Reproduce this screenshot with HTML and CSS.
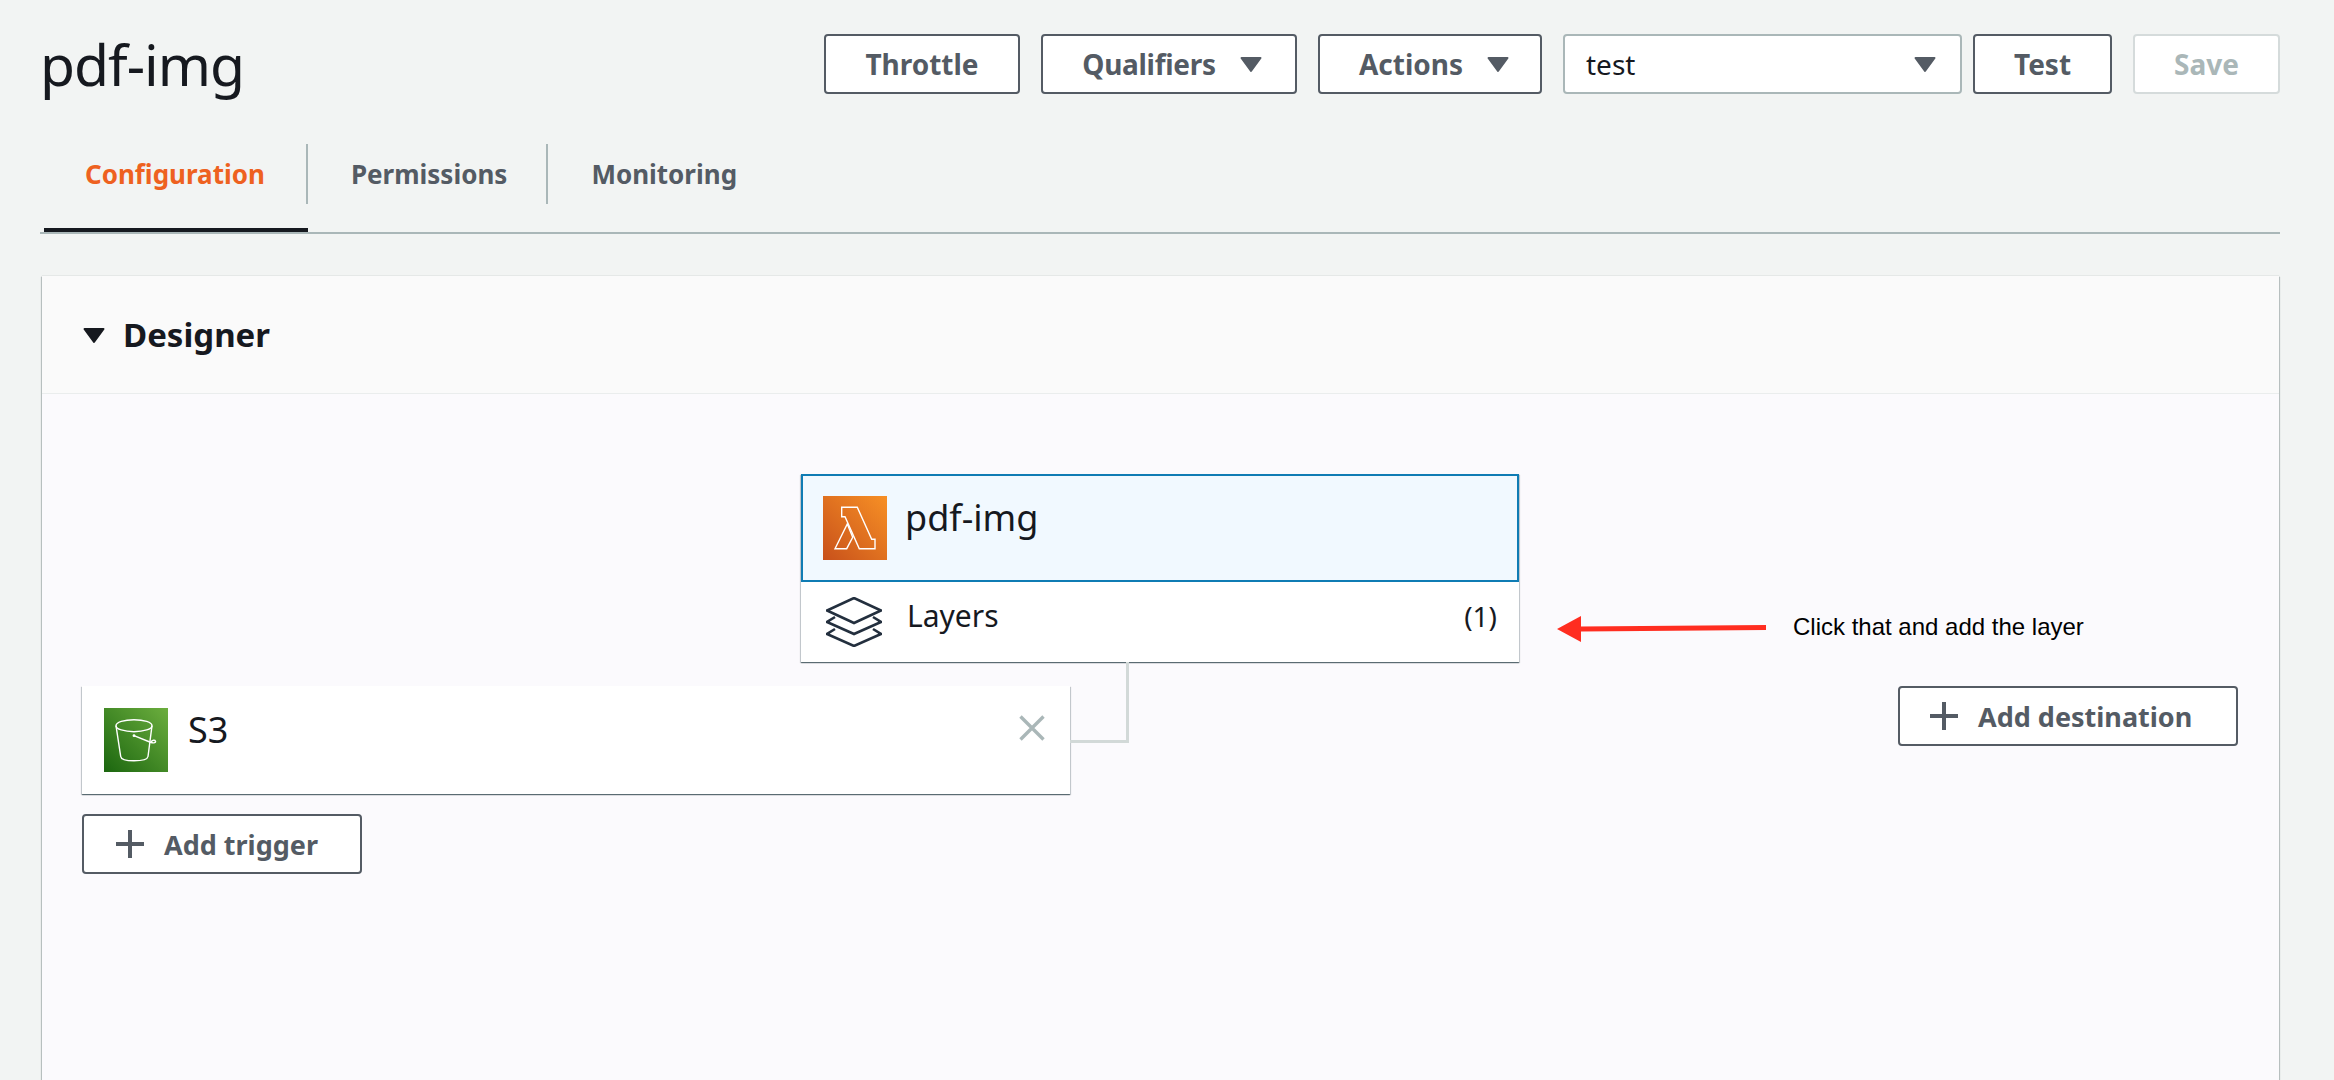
FILE: index.html
```html
<!DOCTYPE html>
<html>
  <head>
    <meta charset="utf-8">
    <link rel="stylesheet" href="styles.css">
    <title>pdf-img</title>
  </head>
  <body>
    <header class="top">
      <h1 class="title">pdf-img</h1>
      <div class="actions">
        <button class="btn w-throttle">Throttle</button>
        <button class="btn w-qualifiers">Qualifiers
          <svg class="caret" viewBox="0 0 22 17"><polygon points="1.5,2 20.5,2 11,15" /></svg>
        </button>
        <button class="btn w-actions">Actions
          <svg class="caret" viewBox="0 0 22 17"><polygon points="1.5,2 20.5,2 11,15" /></svg>
        </button>
        <div class="select">
          <span>test</span>
          <svg class="caret" viewBox="0 0 22 17"><polygon points="1.5,2 20.5,2 11,15" /></svg>
        </div>
        <button class="btn w-test">Test</button>
        <button class="btn w-save disabled">Save</button>
      </div>
    </header>

    <nav class="tabs">
      <div class="tab active"><span>Configuration</span></div>
      <div class="tab"><span>Permissions</span></div>
      <div class="tab last"><span>Monitoring</span></div>
    </nav>

    <section class="panel">
      <div class="panel-head">
        <svg class="panel-caret" viewBox="0 0 22 17"><polygon points="1.5,2 20.5,2 11,15" /></svg>
        <h2>Designer</h2>
      </div>
      <div class="canvas">
        <div class="fn-card">
          <div class="fn-head">
            <svg class="service-icon" viewBox="0 0 64 64">
              <defs>
                <linearGradient id="orange" x1="0" y1="1" x2="1" y2="0">
                  <stop offset="0" stop-color="#c8511b" />
                  <stop offset="1" stop-color="#f79025" />
                </linearGradient>
              </defs>
              <rect width="64" height="64" fill="url(#orange)" />
              <path class="glyph" d="M18.7 11.3H34.3L48.7 43.3H52V52.7H36.3L22 20.7H18.7Z" />
              <path class="glyph" d="M24.3 28L29.7 41.3L23.7 52.7H12Z" />
            </svg>
            <span class="fn-name">pdf-img</span>
          </div>
          <div class="fn-layers">
            <svg class="layers-icon" viewBox="0 0 56 50">
              <path d="M28 1L55 13.5L28 26L1 13.5Z" />
              <path d="M9 20L1 25L28 37L55 25L47 20" />
              <path d="M9 32L1 37L28 49L55 37L47 32" />
            </svg>
            <span class="layers-name">Layers</span>
            <span class="layers-count">(1)</span>
          </div>
        </div>

        <div class="note">
          <svg class="note-arrow" viewBox="0 0 210 26">
            <path d="M0 13L24 0V10.5L209 9V14L24 15.5V26Z" />
          </svg>
          <span>Click that and add the layer</span>
        </div>

        <div class="flow-row">
          <div class="triggers">
            <div class="trigger-card">
              <svg class="service-icon" viewBox="0 0 64 64">
                <defs>
                  <linearGradient id="green" x1="0" y1="1" x2="1" y2="0">
                    <stop offset="0" stop-color="#1b660f" />
                    <stop offset="1" stop-color="#6cae3e" />
                  </linearGradient>
                </defs>
                <rect width="64" height="64" fill="url(#green)" />
                <ellipse class="glyph" cx="30" cy="17.7" rx="18" ry="6" />
                <path class="glyph" d="M12 17.7L16.7 48.5C17 51.5 23 52.8 30 52.8S43.5 51.5 44 48.5L48 17.7" />
                <path class="glyph" d="M30 27.7L47 34.5C50 35.5 52 34.5 51.5 33.2S48 31.5 47 34.5" />
                <circle cx="30" cy="27.7" r="1.4" fill="#fff" />
              </svg>
              <span class="trigger-name">S3</span>
              <svg class="close" viewBox="0 0 26 26"><path d="M1.5 1.5L24.5 24.5M24.5 1.5L1.5 24.5" /></svg>
            </div>
            <button class="btn add w-trigger">
              <svg class="plus" viewBox="0 0 28 28"><path d="M14 0V28M0 14H28" /></svg>
              Add trigger
            </button>
          </div>
          <button class="btn add w-destination">
            <svg class="plus" viewBox="0 0 28 28"><path d="M14 0V28M0 14H28" /></svg>
            Add destination
          </button>
        </div>
      </div>
    </section>
  </body>
</html>
```

FILE: styles.css
```css
* {
  box-sizing: border-box;
}

body {
  margin: 0;
  height: 100vh;
  overflow: hidden;
  display: flex;
  flex-direction: column;
  padding: 0 54px 0 40px;
  background-color: #f2f4f3;
  color: #16191f;
  font-family: "Noto Sans", sans-serif;
}

.top {
  display: flex;
  justify-content: space-between;
  padding-top: 34px;
  height: 144px;
}

.title {
  margin: 0;
  font-size: 57px;
  font-weight: 400;
  line-height: 60px;
  letter-spacing: -1px;
}

.actions {
  display: flex;
  gap: 21px;
  height: 60px;
}

.btn {
  display: flex;
  align-items: center;
  justify-content: center;
  height: 60px;
  padding: 0;
  border: 2px solid #545b64;
  border-radius: 4px;
  background-color: #fff;
  color: #545b64;
  font-family: "Noto Sans", sans-serif;
  font-size: 28px;
  font-weight: 700;
}

.w-throttle { width: 196px; }
.w-qualifiers { width: 256px; gap: 24px; padding-left: 6px; letter-spacing: -0.3px; }
.w-actions { width: 224px; gap: 24px; padding-left: 8px; }
.w-test { width: 139px; margin-left: -10px; }
.w-save { width: 147px; }

.btn.add {
  justify-content: flex-start;
  gap: 20px;
  font-size: 27px;
}

.w-trigger { width: 280px; padding-left: 32px; }
.w-destination { width: 340px; padding-left: 30px; }

.btn.disabled {
  border-color: #d5dbdb;
  color: #aab7b8;
}

.caret {
  width: 22px;
  height: 17px;
  flex: none;
}

.caret polygon,
.panel-caret polygon {
  fill: #545b64;
  stroke: #545b64;
  stroke-width: 2;
  stroke-linejoin: round;
}

.select {
  display: flex;
  align-items: center;
  justify-content: space-between;
  width: 399px;
  height: 60px;
  padding: 0 24px 0 21px;
  border: 2px solid #aab7b8;
  border-radius: 4px;
  background-color: #fff;
  font-size: 28px;
}

.tabs {
  display: flex;
  height: 90px;
  padding-left: 4px;
  border-bottom: 2px solid #aab7b8;
}

.tab {
  height: 88px;
  font-size: 26px;
  font-weight: 700;
  color: #545b64;
}

.tab span {
  display: flex;
  align-items: center;
  height: 60px;
  padding: 0 39px 0 43px;
  border-right: 2px solid #aab7b8;
}

.tab.last span {
  border-right: none;
}

.tab.active {
  border-bottom: 4px solid #16191f;
  color: #ee6120;
}

.tab.active span {
  padding: 0 41px;
}

.panel {
  flex: 1;
  display: flex;
  flex-direction: column;
  margin: 42px 1px 0 2px;
  background-color: #fbfafd;
  box-shadow: 0 0 1px rgba(0, 28, 36, 0.3), 1px 1px 1px rgba(0, 28, 36, 0.2), -1px 1px 1px rgba(0, 28, 36, 0.2);
}

.panel-head {
  display: flex;
  align-items: center;
  gap: 18px;
  height: 118px;
  padding-left: 41px;
  background-color: #fafafa;
  border-bottom: 1px solid #eaeded;
}

.panel-head h2 {
  margin: 0;
  font-size: 33px;
  font-weight: 700;
}

.panel-caret {
  width: 22px;
  height: 17px;
  margin-top: 2px;
}

.panel-caret polygon {
  fill: #16191f;
  stroke: #16191f;
}

.canvas {
  position: relative;
  flex: 1;
  padding: 80px 41px 0 40px;
}

.fn-card {
  width: 718px;
  margin-left: 719px;
  background-color: #fff;
  box-shadow: 0 1px 1px rgba(0, 28, 36, 0.5), 1px 1px 1px rgba(0, 28, 36, 0.15), -1px 1px 1px rgba(0, 28, 36, 0.15);
}

.fn-head {
  display: flex;
  align-items: flex-start;
  gap: 18px;
  height: 108px;
  padding: 20px;
  border: 2px solid #0f7cb4;
  background-color: #f1f9ff;
}

.service-icon {
  width: 64px;
  height: 64px;
  flex: none;
}

.glyph {
  fill: none;
  stroke: #fff;
  stroke-width: 1.4;
}

.fn-name,
.trigger-name {
  font-size: 36px;
  line-height: 44px;
}

.fn-layers {
  display: flex;
  align-items: flex-start;
  height: 80px;
  padding: 15px 22px 0 25px;
}

.layers-icon {
  width: 56px;
  height: 50px;
  flex: none;
  fill: none;
  stroke: #232f3e;
  stroke-width: 2.6;
}

.layers-name {
  margin-left: 25px;
  font-size: 30px;
  line-height: 38px;
}

.layers-count {
  margin-left: auto;
  font-size: 28px;
  line-height: 38px;
}

.note {
  position: absolute;
  left: 1515px;
  top: 218px;
  display: flex;
  align-items: center;
  gap: 26px;
  color: #000;
  font-family: "Liberation Sans", sans-serif;
  font-size: 24px;
}

.note-arrow {
  width: 210px;
  height: 26px;
  margin-top: 4px;
  fill: #ff2d20;
}

.flow-row {
  display: flex;
  justify-content: space-between;
  margin-top: 24px;
}

.triggers {
  display: flex;
  flex-direction: column;
  gap: 20px;
}

.trigger-card {
  position: relative;
  display: flex;
  align-items: flex-start;
  gap: 20px;
  width: 988px;
  height: 108px;
  padding: 22px;
  background-color: #fff;
  box-shadow: 0 1px 1px rgba(0, 28, 36, 0.5), 1px 1px 1px rgba(0, 28, 36, 0.15), -1px 1px 1px rgba(0, 28, 36, 0.15);
}

/* line from the trigger up to the function */
.trigger-card::after {
  content: "";
  position: absolute;
  left: 100%;
  bottom: 51px;
  width: 56px;
  height: 78px;
  border-right: 3px solid #d2d9d8;
  border-bottom: 3px solid #d2d9d8;
}

.close {
  position: absolute;
  top: 29px;
  right: 25px;
  width: 26px;
  height: 26px;
  fill: none;
  stroke: #aab7b8;
  stroke-width: 3.4;
}

.plus {
  width: 28px;
  height: 28px;
  flex: none;
  fill: none;
  stroke: #545b64;
  stroke-width: 4;
}
```
